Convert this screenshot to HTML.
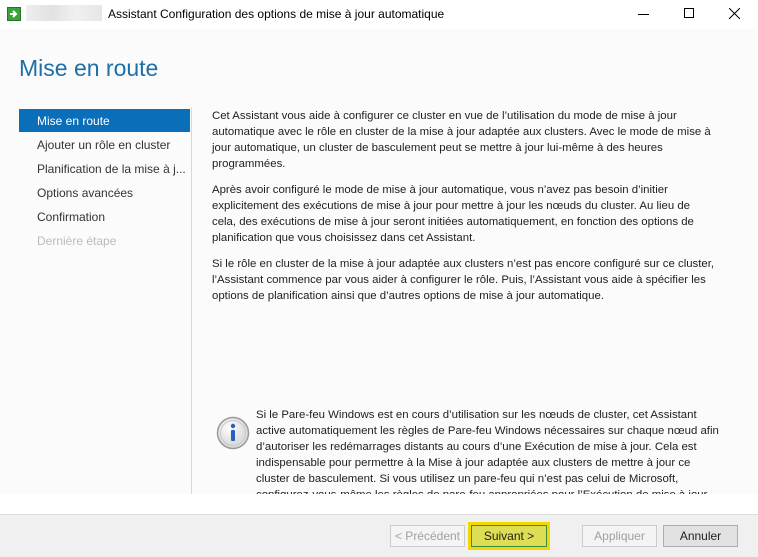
<!DOCTYPE html>
<html><head><meta charset="utf-8"><style>
*{margin:0;padding:0;box-sizing:border-box}
body{width:758px;height:557px;overflow:hidden;background:#fbfbfb;font-family:"Liberation Sans",sans-serif;font-size:11.4px;color:#1e1e1e;position:relative}
.tb{position:absolute;left:0;top:0;width:758px;height:29px;background:#fff}
.tb .t{position:absolute;left:108px;top:7px;font-size:12px;color:#000}
.abs{position:absolute}
.nav div{position:absolute;left:37px;white-space:nowrap;font-size:12px;color:#333}
p{position:absolute;left:212px;white-space:nowrap;line-height:16px}
.btn{position:absolute;top:525px;height:22px;border:1px solid #adadad;background:#e1e1e1;text-align:center;line-height:20px;font-size:12px}
</style></head><body>
<div class="tb">
  <div class="abs" style="left:7px;top:7px;width:14px;height:14px;background:#3aa33a;border:1px solid #1f7a1f"><svg width="12" height="12" viewBox="0 0 12 12"><path d="M2 6h6M5 3l3 3-3 3" stroke="#fff" stroke-width="2" fill="none"/></svg></div>
  <div class="abs" style="left:26px;top:5px;width:76px;height:16px;background:linear-gradient(90deg,#eee,#e2e2e2,#f0f0f0,#e6e6e6);"></div>
  <div class="t">Assistant Configuration des options de mise à jour automatique</div>
  <div class="abs" style="left:638px;top:14px;width:11px;height:1px;background:#000"></div>
  <div class="abs" style="left:684px;top:8px;width:10px;height:10px;border:1px solid #000"></div>
  <svg class="abs" style="left:729px;top:8px" width="11" height="11"><path d="M0 0L11 11M11 0L0 11" stroke="#000" stroke-width="1"/></svg>
</div>
<div class="abs" style="left:19px;top:55px;font-size:23px;color:#1e6fa8;font-weight:300">Mise en route</div>
<div class="abs" style="left:19px;top:109px;width:171px;height:23px;background:#0a6fb8"></div>
<div class="abs" style="left:191px;top:108px;width:1px;height:386px;background:#d8d8d8"></div>
<div class="nav">
<div style="top:114px;color:#fff">Mise en route</div>
<div style="top:138px">Ajouter un rôle en cluster</div>
<div style="top:162px">Planification de la mise à j...</div>
<div style="top:186px">Options avancées</div>
<div style="top:210px">Confirmation</div>
<div style="top:234px;color:#bbb">Dernière étape</div>
</div>
<p style="top:108px">Cet Assistant vous aide à configurer ce cluster en vue de l’utilisation du mode de mise à jour<br>automatique avec le rôle en cluster de la mise à jour adaptée aux clusters. Avec le mode de mise à<br>jour automatique, un cluster de basculement peut se mettre à jour lui-même à des heures<br>programmées.</p>
<p style="top:182px">Après avoir configuré le mode de mise à jour automatique, vous n’avez pas besoin d’initier<br>explicitement des exécutions de mise à jour pour mettre à jour les nœuds du cluster. Au lieu de<br>cela, des exécutions de mise à jour seront initiées automatiquement, en fonction des options de<br>planification que vous choisissez dans cet Assistant.</p>
<p style="top:256px">Si le rôle en cluster de la mise à jour adaptée aux clusters n’est pas encore configuré sur ce cluster,<br>l’Assistant commence par vous aider à configurer le rôle. Puis, l’Assistant vous aide à spécifier les<br>options de planification ainsi que d’autres options de mise à jour automatique.</p>
<div class="abs" style="left:205px;top:400px;width:553px;height:94px;overflow:hidden">
<svg class="abs" style="left:11px;top:16px" width="34" height="34"><defs><radialGradient id="g" cx="40%" cy="35%"><stop offset="0" stop-color="#fff"/><stop offset="1" stop-color="#dcdcdc"/></radialGradient></defs><circle cx="17" cy="17" r="15.5" fill="url(#g)" stroke="#9a9a9a" stroke-width="1.5"/><circle cx="17" cy="17" r="12.5" fill="none" stroke="#c8c8c8"/><circle cx="17" cy="10" r="2.2" fill="#2a5fc0"/><rect x="15" y="14" width="4" height="11" rx="1" fill="#2a5fc0"/></svg>
<p style="left:51px;top:7px">Si le Pare-feu Windows est en cours d’utilisation sur les nœuds de cluster, cet Assistant<br>active automatiquement les règles de Pare-feu Windows nécessaires sur chaque nœud afin<br>d’autoriser les redémarrages distants au cours d’une Exécution de mise à jour. Cela est<br>indispensable pour permettre à la Mise à jour adaptée aux clusters de mettre à jour ce<br>cluster de basculement. Si vous utilisez un pare-feu qui n’est pas celui de Microsoft,<br>configurez-vous-même les règles de pare-feu appropriées pour l’Exécution de mise à jour.</p>
</div>
<div class="abs" style="left:0;top:494px;width:758px;height:20px;background:#fff"></div>
<div class="abs" style="left:0;top:514px;width:758px;height:43px;background:#f0f0f0;border-top:1px solid #dcdcdc"></div>
<div class="btn" style="left:390px;width:75px;color:#a0a0a0;background:#f4f4f4;border-color:#ccc">&lt; Précédent</div>
<div class="abs" style="left:468px;top:522px;width:82px;height:28px;background:#f0d800"></div>
<div class="btn" style="left:471px;top:525px;width:76px;background:#dede55;border-color:#3c8a3c">Suivant &gt;</div>
<div class="btn" style="left:582px;width:75px;color:#a0a0a0;background:#f4f4f4;border-color:#ccc">Appliquer</div>
<div class="btn" style="left:663px;width:75px">Annuler</div>
</body></html>
